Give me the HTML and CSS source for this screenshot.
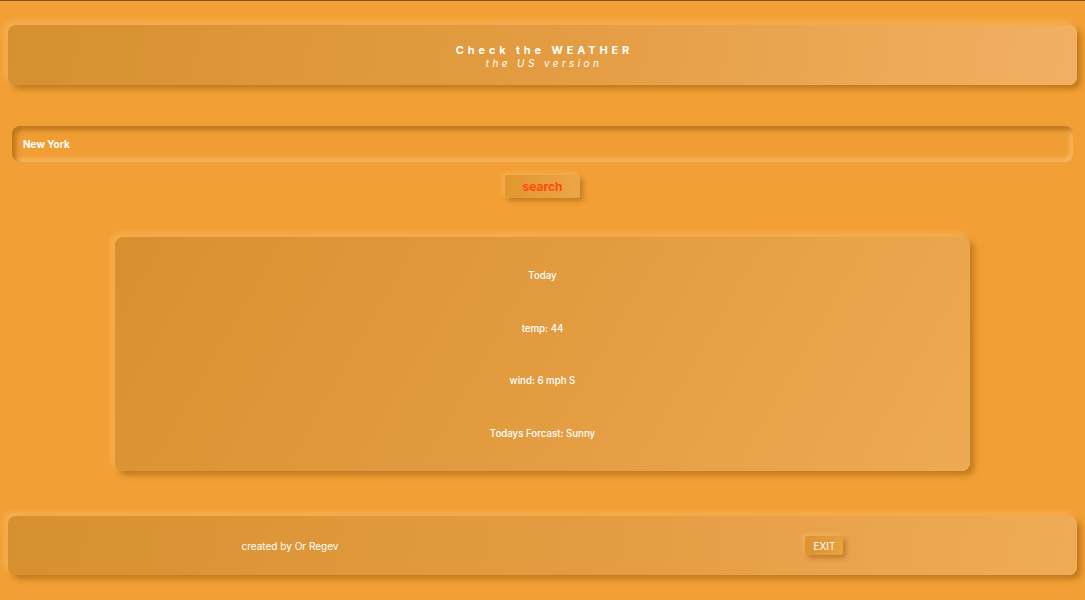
FILE: index.html
```html
<!DOCTYPE html>
<html>
<head>
<meta charset="utf-8">
<link rel="stylesheet" href="styles.css">
</head>
<body>
<div class="app">
  <header class="header">
    <h1 class="title">Check the WEATHER</h1>
    <p class="subtitle">the US version</p>
  </header>
  <div class="search-area">
    <div class="input">New York</div>
    <button class="search-btn">search</button>
  </div>
  <section class="card">
    <p>Today</p>
    <p>temp: 44</p>
    <p>wind: 6 mph S</p>
    <p>Todays Forcast: Sunny</p>
  </section>
  <footer class="footer">
    <span class="credit">created by Or Regev</span>
    <button class="exit-btn">EXIT</button>
  </footer>
</div>
</body>
</html>
```

FILE: styles.css
```css
html {
  background: #f2a035;
  height: 100%;
}
body {
  margin: 0;
  height: 100%;
  box-sizing: border-box;
  border-top: 1px solid #7d5526;
  padding: 0 8px;
  font-family: Inter, "Noto Sans", sans-serif;
  color: #fff;
  background: #f2a035;
}
.app {
  display: flex;
  flex-direction: column;
  padding-top: 24px;
}
.header {
  height: 60px;
  border-radius: 8px;
  background: linear-gradient(100deg, #d7902f 0%, #e49c42 50%, #f1b062 100%);
  box-shadow: 4px 4px 6px rgba(150, 85, 10, 0.55), -3px -3px 6px rgba(255, 196, 120, 0.55);
  display: flex;
  flex-direction: column;
  align-items: center;
  justify-content: center;
  padding-top: 2px;
  box-sizing: border-box;
}
.title {
  margin: 0;
  font-size: 11px;
  font-weight: 700;
  letter-spacing: 3.85px;
  line-height: 13px;
  padding-left: 4px;
}
.subtitle {
  margin: 0;
  font-size: 10px;
  font-style: italic;
  letter-spacing: 3.4px;
  line-height: 12px;
  padding-left: 3px;
}
.search-area {
  display: flex;
  flex-direction: column;
  align-items: center;
  margin-top: 41px;
}
.input {
  align-self: stretch;
  margin: 0 4px;
  height: 36px;
  border-radius: 8px;
  background: #f09e34;
  box-shadow: inset 4px 4px 5px rgba(165, 95, 15, 0.65), inset -3px -3px 5px rgba(255, 200, 130, 0.6);
  display: flex;
  align-items: center;
  padding-left: 11px;
  font-size: 10px;
  font-weight: 700;
}
.search-btn {
  margin-top: 13px;
  width: 75px;
  height: 23px;
  border: none;
  border-radius: 3px;
  background: linear-gradient(100deg, #e2962e, #eca648);
  box-shadow: 3px 3px 5px rgba(150, 85, 10, 0.5), -2px -2px 4px rgba(255, 196, 120, 0.5);
  color: #ff4a12;
  font-family: Inter, sans-serif;
  font-size: 12px;
  font-weight: 700;
  padding: 0;
}
.card {
  align-self: center;
  width: 80%;
  margin-top: 39px;
  height: 234px;
  box-sizing: border-box;
  border-radius: 8px;
  background: linear-gradient(120deg, #d8902f 0%, #e39b40 50%, #eeaa52 100%);
  box-shadow: 4px 4px 6px rgba(150, 85, 10, 0.55), -3px -3px 6px rgba(255, 196, 120, 0.55);
  display: flex;
  flex-direction: column;
  align-items: center;
  justify-content: space-between;
  padding: 33px 0 31px;
}
.card p {
  margin: 0;
  font-size: 9.7px;
  font-weight: 500;
  line-height: 12px;
}
.footer {
  margin-top: 45px;
  height: 59px;
  border-radius: 8px;
  background: linear-gradient(100deg, #d7902f 0%, #e49c42 55%, #f0ab56 100%);
  box-shadow: 4px 4px 6px rgba(150, 85, 10, 0.55), -3px -3px 6px rgba(255, 196, 120, 0.55);
  display: flex;
  align-items: center;
  justify-content: space-around;
}
.credit {
  font-size: 10px;
  font-weight: 400;
}
.exit-btn {
  width: 38px;
  height: 19px;
  border: none;
  border-radius: 3px;
  background: linear-gradient(100deg, #dc9330, #e8a23f);
  box-shadow: 3px 3px 5px rgba(150, 85, 10, 0.5), -2px -2px 4px rgba(255, 196, 120, 0.5);
  color: #fff;
  font-family: Inter, sans-serif;
  font-size: 10px;
  padding: 0;
}
```
